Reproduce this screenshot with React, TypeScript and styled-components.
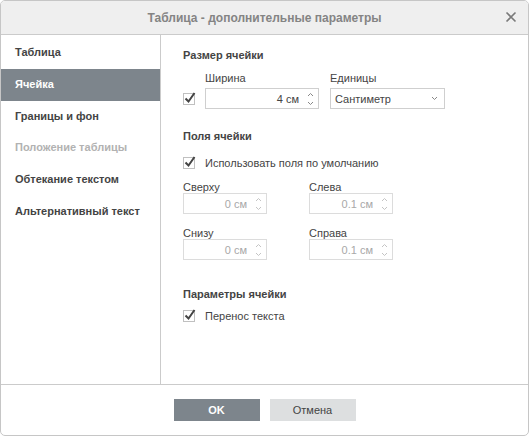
import React from 'react';
import styled, { createGlobalStyle } from 'styled-components';

const Global = createGlobalStyle`
  html, body { margin: 0; padding: 0; background: #fff; }
  body { font-family: 'Liberation Sans', Arial, sans-serif; font-size: 11px; color: #444; }
  * { box-sizing: border-box; }
`;

const tabs = [
  { label: 'Таблица' },
  { label: 'Ячейка', active: true },
  { label: 'Границы и фон' },
  { label: 'Положение таблицы', disabled: true },
  { label: 'Обтекание текстом' },
  { label: 'Альтернативный текст' },
];

const Check = () => (
  <CheckBox>
    <svg width="14" height="14" viewBox="0 0 14 14">
      <path d="M2.5 7.5 L5.5 10.5 L11.5 2" fill="none" stroke="#444" strokeWidth="2" />
    </svg>
  </CheckBox>
);

const Spin = ({ dim }: { dim?: boolean }) => (
  <SpinBox>
    <svg width="7" height="14" viewBox="0 0 7 14">
      <path d="M1 4 L3.5 1.5 L6 4 M1 10 L3.5 12.5 L6 10" fill="none" stroke={dim ? '#c4c4c4' : '#888'} strokeWidth="1" />
    </svg>
  </SpinBox>
);

const Spinner = ({ value, width, disabled }: { value: string; width: number; disabled?: boolean }) => (
  <InputBox $w={width} $disabled={disabled}>
    <span>{value}</span>
    <Spin dim={disabled} />
  </InputBox>
);

export default function App() {
  return (
    <>
      <Global />
      <Dialog>
        <Header>
          <Title>Таблица - дополнительные параметры</Title>
          <Close>
            <svg width="12" height="12" viewBox="0 0 12 12">
              <path d="M1.5 1.5 L10.5 10.5 M10.5 1.5 L1.5 10.5" stroke="#7a7a7a" strokeWidth="1.6" />
            </svg>
          </Close>
        </Header>
        <Body>
          <Sidebar>
            {tabs.map((t) => (
              <Tab key={t.label} $active={t.active} $disabled={t.disabled}>
                {t.label}
              </Tab>
            ))}
          </Sidebar>
          <Content>
            <SectionTitle>Размер ячейки</SectionTitle>
            <SizeRow>
              <CheckCell>
                <Check />
              </CheckCell>
              <Field>
                <Label>Ширина</Label>
                <Spinner value="4 см" width={114} />
              </Field>
              <Field>
                <Label>Единицы</Label>
                <Select>
                  <span>Сантиметр</span>
                  <svg width="7" height="5" viewBox="0 0 7 5">
                    <path d="M1 1 L3.5 3.5 L6 1" fill="none" stroke="#888" strokeWidth="1" />
                  </svg>
                </Select>
              </Field>
            </SizeRow>

            <SectionTitle $top={20}>Поля ячейки</SectionTitle>
            <CheckRow $top={12}>
              <Check />
              <span>Использовать поля по умолчанию</span>
            </CheckRow>
            <MarginGrid>
              <Field>
                <Label $gap={-1}>Сверху</Label>
                <Spinner value="0 см" width={84} disabled />
              </Field>
              <Field>
                <Label $gap={-1}>Слева</Label>
                <Spinner value="0.1 см" width={84} disabled />
              </Field>
              <Field>
                <Label $gap={-1}>Снизу</Label>
                <Spinner value="0 см" width={84} disabled />
              </Field>
              <Field>
                <Label $gap={-1}>Справа</Label>
                <Spinner value="0.1 см" width={84} disabled />
              </Field>
            </MarginGrid>

            <SectionTitle $top={27}>Параметры ячейки</SectionTitle>
            <CheckRow $top={7}>
              <Check />
              <span>Перенос текста</span>
            </CheckRow>
          </Content>
        </Body>
        <Footer>
          <Button $primary>OK</Button>
          <Button>Отмена</Button>
        </Footer>
      </Dialog>
    </>
  );
}

const Dialog = styled.div`
  width: 529px;
  height: 436px;
  border: 1px solid #c6c6c6;
  border-radius: 5px;
  overflow: hidden;
  display: flex;
  flex-direction: column;
  background: #fff;
`;

const Header = styled.div`
  height: 34px;
  flex-shrink: 0;
  background: #efefef;
  border-bottom: 1px solid #cbcbcb;
  display: flex;
  align-items: center;
  justify-content: center;
  position: relative;
`;

const Title = styled.div`
  font-size: 12px;
  font-weight: 700;
  color: #848484;
`;

const Close = styled.div`
  position: absolute;
  right: 11px;
  top: 10px;
  width: 12px;
  height: 12px;
  display: flex;
`;

const Body = styled.div`
  flex: 1;
  display: flex;
  border-bottom: 1px solid #cbcbcb;
`;

const Sidebar = styled.div`
  width: 160px;
  flex-shrink: 0;
  border-right: 1px solid #cbcbcb;
  padding-top: 2px;
  display: flex;
  flex-direction: column;
`;

const Tab = styled.div<{ $active?: boolean; $disabled?: boolean }>`
  height: 31.8px;
  line-height: 31px;
  padding-left: 14px;
  font-weight: 700;
  font-size: 11px;
  color: ${(p) => (p.$active ? '#fff' : p.$disabled ? '#b2b2b2' : '#444')};
  background: ${(p) => (p.$active ? '#7d858c' : 'transparent')};
`;

const Content = styled.div`
  flex: 1;
  padding: 13px 0 0 22px;
  display: flex;
  flex-direction: column;
`;

const SectionTitle = styled.div<{ $top?: number }>`
  font-weight: 700;
  line-height: 14px;
  margin-top: ${(p) => p.$top ?? 0}px;
`;

const SizeRow = styled.div`
  display: flex;
  align-items: flex-end;
  margin-top: 9px;
`;

const CheckCell = styled.div`
  height: 20px;
  width: 22px;
  display: flex;
  align-items: center;
`;

const Field = styled.div`
  display: flex;
  flex-direction: column;
  margin-right: 11px;
`;

const Label = styled.div<{ $gap?: number }>`
  line-height: 14px;
  margin-bottom: ${(p) => p.$gap ?? 3}px;
`;

const InputBox = styled.div<{ $w: number; $disabled?: boolean }>`
  width: ${(p) => p.$w}px;
  height: 21px;
  border: 1px solid ${(p) => (p.$disabled ? '#dcdcdc' : '#cfcfcf')};
  color: ${(p) => (p.$disabled ? '#a8a8a8' : '#444')};
  display: flex;
  align-items: center;
  justify-content: flex-end;
  padding-right: 4px;
  span { margin-right: 8px; }
`;

const SpinBox = styled.div`
  width: 7px;
  height: 14px;
  display: flex;
`;

const Select = styled.div`
  width: 115px;
  height: 21px;
  border: 1px solid #cfcfcf;
  display: flex;
  align-items: center;
  justify-content: space-between;
  padding: 0 6px 0 4px;
`;

const CheckBox = styled.div`
  width: 12px;
  height: 12px;
  border: 1px solid #c0c0c0;
  position: relative;
  flex-shrink: 0;
  svg { position: absolute; left: -1px; top: -3px; }
`;

const CheckRow = styled.div<{ $top?: number }>`
  display: flex;
  align-items: center;
  gap: 10px;
  height: 16px;
  margin-top: ${(p) => p.$top ?? 0}px;
`;

const MarginGrid = styled.div`
  display: grid;
  grid-template-columns: 126px 84px;
  row-gap: 12px;
  margin-top: 9px;
`;

const Footer = styled.div`
  height: 50px;
  flex-shrink: 0;
  display: flex;
  align-items: center;
  justify-content: center;
  gap: 10px;
`;

const Button = styled.div<{ $primary?: boolean }>`
  width: 86px;
  height: 22px;
  line-height: 22px;
  text-align: center;
  font-size: 11px;
  font-weight: ${(p) => (p.$primary ? 700 : 400)};
  color: ${(p) => (p.$primary ? '#fff' : '#444')};
  background: ${(p) => (p.$primary ? '#7d858c' : '#dddfe0')};
`;
